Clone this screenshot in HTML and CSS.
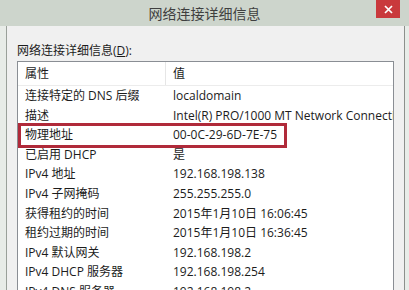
FILE: index.html
```html
<!DOCTYPE html>
<html lang="zh-CN">
<head>
<meta charset="utf-8">
<title>网络连接详细信息</title>
<link rel="stylesheet" href="styles.css">
</head>
<body>
<div class="frame">
  <div class="titlebar">
    <span></span>
    <span class="title">网络连接详细信息</span>
    <div class="close"><svg width="9" height="9" viewBox="0 0 9 9"><path d="M1 1 L8 8 M8 1 L1 8" stroke="#fff" stroke-width="1.7" fill="none"/></svg></div>
  </div>
  <div class="client">
    <div class="label">网络连接详细信息(<u>D</u>):</div>
    <div class="list">
      <div class="row head"><div class="c1">属性</div><div class="c2">值</div></div>
      <div class="row"><div class="c1">连接特定的 DNS 后缀</div><div class="c2">localdomain</div></div>
      <div class="row"><div class="c1">描述</div><div class="c2">Intel(R) PRO/1000 MT Network Connection</div></div>
      <div class="row hl"><div class="c1">物理地址</div><div class="c2">00-0C-29-6D-7E-75</div></div>
      <div class="row"><div class="c1">已启用 DHCP</div><div class="c2">是</div></div>
      <div class="row"><div class="c1">IPv4 地址</div><div class="c2">192.168.198.138</div></div>
      <div class="row"><div class="c1">IPv4 子网掩码</div><div class="c2">255.255.255.0</div></div>
      <div class="row"><div class="c1">获得租约的时间</div><div class="c2">2015年1月10日 16:06:45</div></div>
      <div class="row"><div class="c1">租约过期的时间</div><div class="c2">2015年1月10日 16:36:45</div></div>
      <div class="row"><div class="c1">IPv4 默认网关</div><div class="c2">192.168.198.2</div></div>
      <div class="row"><div class="c1">IPv4 DHCP 服务器</div><div class="c2">192.168.198.254</div></div>
      <div class="row"><div class="c1">IPv4 DNS 服务器</div><div class="c2">192.168.198.2</div></div>
    </div>
  </div>
</div>
</body>
</html>
```

FILE: styles.css
```css
html, body {
  margin: 0;
  padding: 0;
}
body {
  width: 409px;
  height: 290px;
  overflow: hidden;
  background: #e8ece8;
  font-family: "Open Sans", "Noto Sans CJK SC", sans-serif;
  font-size: 12px;
  color: #1c1c1c;
}
.frame {
  height: 290px;
  display: flex;
  flex-direction: column;
}
.titlebar {
  height: 26px;
  flex: none;
  background: #cdd5cc;
  display: grid;
  grid-template-columns: 1fr auto 1fr;
  align-items: center;
}
.title {
  font-family: "Noto Sans CJK SC", sans-serif;
  font-size: 14px;
  color: #3f3f3f;
  line-height: 26px;
}
.close {
  justify-self: end;
  align-self: start;
  margin-right: 9px;
  width: 24px;
  height: 18px;
  background: #c9393c;
  display: flex;
  align-items: center;
  justify-content: center;
}
.close svg {
  display: block;
}
.client {
  flex: 1;
  margin: 0 4px 0 6px;
  border-left: 1px solid #9aa09a;
  border-right: 1px solid #8c908c;
  background: #f0f0f0;
  padding: 17px 10px 0 10px;
  overflow: hidden;
}
.label {
  line-height: 15px;
  height: 15px;
  margin-bottom: 3px;
  white-space: nowrap;
}
.label u {
  text-underline-offset: 1px;
}
.list {
  border: 1px solid #8a8e94;
  background: #fff;
  height: 300px;
  overflow: hidden;
}
.row {
  display: grid;
  grid-template-columns: 148px 1fr;
  height: 19.6px;
  line-height: 19.6px;
  white-space: nowrap;
}
.row > div {
  padding-left: 7px;
  overflow: hidden;
}
.row.head {
  height: 24px;
  line-height: 23px;
  border-bottom: 1px solid #ececec;
  box-sizing: border-box;
}
.row.head .c1 {
  border-right: 1px solid #e6e6e6;
}
.row.hl {
  position: relative;
}
.row.hl::after {
  content: "";
  position: absolute;
  left: 0;
  top: -2px;
  width: 269px;
  height: 25px;
  border: 3px solid #b02a3a;
  box-sizing: border-box;
}
```
